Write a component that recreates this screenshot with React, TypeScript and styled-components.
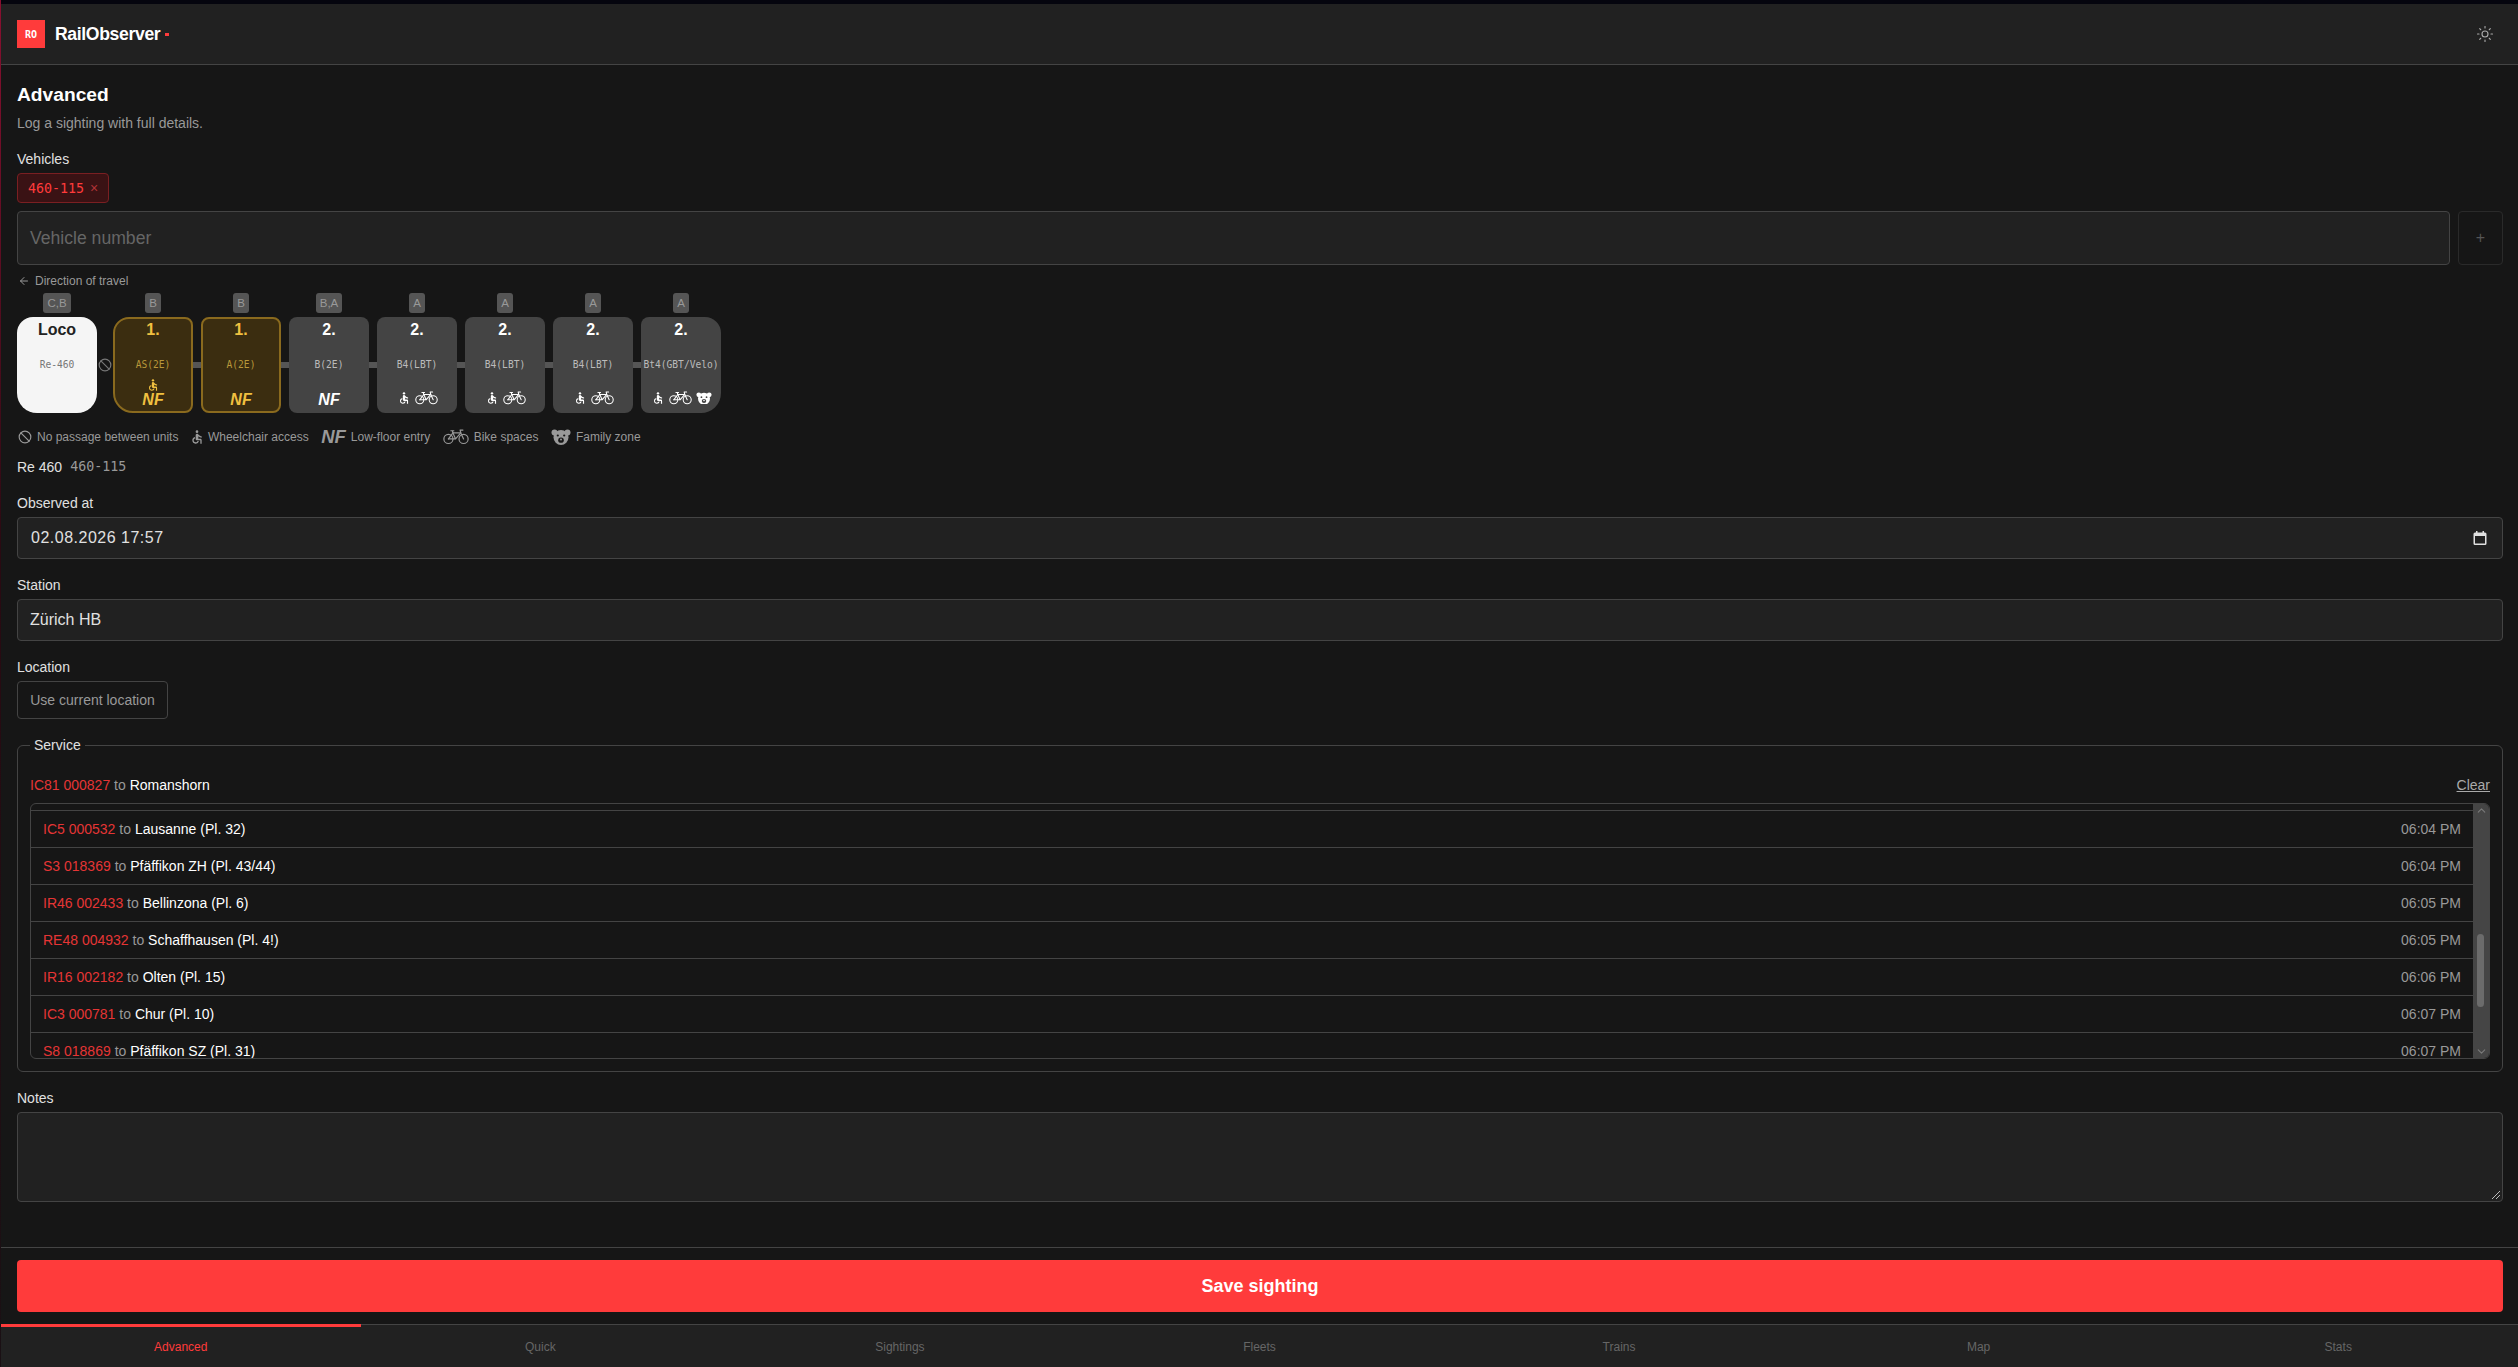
import { Fragment } from "react";
import styled, { createGlobalStyle } from "styled-components";
import { Sun, Ban, ArrowLeft, ChevronUp, ChevronDown } from "lucide-react";
import { MdAccessible } from "react-icons/md";

const GlobalStyle = createGlobalStyle`
  html, body {
    margin: 0;
    padding: 0;
    height: 100%;
    overflow: hidden;
    background: #161616;
    font-family: "Liberation Sans", Arial, sans-serif;
    color: #e0e0e0;
  }
  * { box-sizing: border-box; }
`;

const Shell = styled.div`
  display: flex;
  flex-direction: column;
  height: 1367px;
  overflow: hidden;
  border-left: 1px solid;
  border-image: linear-gradient(#8a1030, #2a0a12 40%, #1a1014) 1;
  background: #161616;
`;

const TopStrip = styled.div`
  height: 4px;
  flex: none;
  background: #05050e;
`;

const Header = styled.header`
  display: flex;
  align-items: center;
  justify-content: space-between;
  height: 61px;
  flex: none;
  padding: 0 16px;
  background: #212121;
  border-bottom: 1px solid #444;
`;

const Brand = styled.div`
  display: flex;
  align-items: center;
  gap: 10px;
`;

const Logo = styled.div`
  width: 28px;
  height: 28px;
  display: flex;
  align-items: center;
  justify-content: center;
  background: #ff3b3b;
  color: #fff;
  font-family: "DejaVu Sans Mono", monospace;
  font-size: 10px;
  font-weight: 700;
`;

const Title = styled.span`
  font-size: 17.6px;
  font-weight: 700;
  color: #fff;
  letter-spacing: -0.35px;
`;

const Dot = styled.span`
  display: inline-block;
  width: 4px;
  height: 3px;
  margin-left: 5px;
  vertical-align: middle;
  background: #ff3b3b;
`;

const ThemeButton = styled.div`
  display: flex;
  color: #aaa;
  margin-right: 8px;
`;

const Main = styled.main`
  flex: 1;
  padding: 19px 15px 0 16px;
  min-height: 0;
`;

const PageTitle = styled.h1`
  margin: 0;
  font-size: 19.2px;
  line-height: 22px;
  font-weight: 700;
  color: #fff;
`;

const Subtitle = styled.p`
  margin: 9px 0 0;
  font-size: 14px;
  line-height: 16px;
  color: #999;
`;

const Label = styled.div<{ $top: number }>`
  margin-top: ${(p) => p.$top}px;
  font-size: 14px;
  line-height: 16px;
  color: #e0e0e0;
`;

const Chip = styled.div`
  display: flex;
  width: fit-content;
  align-items: center;
  gap: 6px;
  height: 30px;
  margin-top: 6px;
  padding: 0 10px;
  border: 1px solid #7a1f22;
  border-radius: 4px;
  background: #3a1214;
  color: #ff3b3b;
  font-family: "DejaVu Sans Mono", monospace;
  font-size: 13.3px;
`;

const ChipClose = styled.span`
  color: #b03236;
  font-family: "Liberation Sans", sans-serif;
  font-size: 14px;
`;

const VehicleRow = styled.div`
  display: flex;
  gap: 8px;
  margin-top: 2px;
`;

const Field = styled.div<{ $h: number }>`
  flex: 1;
  height: ${(p) => p.$h}px;
  display: flex;
  align-items: center;
  justify-content: space-between;
  margin-top: 6px;
  padding: 0 12px;
  background: #212121;
  border: 1px solid #444;
  border-radius: 4px;
  font-size: 16px;
  color: #e0e0e0;
`;

const Placeholder = styled.span`
  color: #666;
  font-size: 17.6px;
`;

const DateText = styled.span`
  margin-left: 1px;
  letter-spacing: 0.5px;
`;

const CalendarGlyph = styled.svg`
  margin-right: 3px;
  color: #e0e0e0;
`;

const AddButton = styled.div`
  width: 45px;
  height: 54px;
  margin-top: 6px;
  display: flex;
  align-items: center;
  justify-content: center;
  border: 1px solid #2a2a2a;
  border-radius: 4px;
  color: #555;
  font-size: 16px;
`;

const Direction = styled.div`
  display: flex;
  align-items: center;
  gap: 5px;
  margin-top: 9px;
  padding-left: 1px;
  height: 14px;
  font-size: 12px;
  color: #999;
`;

const Train = styled.div`
  display: flex;
  align-items: flex-end;
  margin-top: 5px;
`;

const CarColumn = styled.div`
  width: 80px;
  display: flex;
  flex-direction: column;
  align-items: center;
  gap: 4px;
`;

const Sector = styled.span`
  height: 20px;
  min-width: 16px;
  padding: 0 4px;
  display: flex;
  align-items: center;
  justify-content: center;
  border-radius: 3px;
  background: #555;
  color: #999;
  font-size: 11.5px;
`;

const carSkins = {
  loco: "background:#f5f5f5;color:#222;border:none;",
  first: "background:#3b2d10;color:#f0c040;border:2px solid #8a6a1e;",
  second: "background:#444;color:#fff;border:none;",
};

const Car = styled.div<{ $skin: keyof typeof carSkins; $radius: string }>`
  position: relative;
  width: 80px;
  height: 96px;
  display: flex;
  flex-direction: column;
  align-items: center;
  ${(p) => carSkins[p.$skin]}
  border-radius: ${(p) => p.$radius};
  overflow: hidden;
`;

const ClassMark = styled.div<{ $border: boolean }>`
  margin-top: ${(p) => (p.$border ? 2 : 4)}px;
  font-size: 16px;
  line-height: 18px;
  font-weight: 700;
`;

const CarType = styled.div<{ $dim: string; $border: boolean }>`
  position: absolute;
  top: ${(p) => (p.$border ? 40 : 42)}px;
  left: 0;
  right: 0;
  text-align: center;
  font-family: "DejaVu Sans Mono", monospace;
  font-size: 9.6px;
  line-height: 12px;
  white-space: nowrap;
  color: ${(p) => p.$dim};
`;

const CarIcons = styled.div<{ $border: boolean }>`
  position: absolute;
  bottom: ${(p) => (p.$border ? 3 : 5)}px;
  left: 0;
  right: 0;
  display: flex;
  flex-direction: column;
  align-items: center;
`;

const IconRow = styled.div<{ $solo: boolean }>`
  display: flex;
  align-items: center;
  justify-content: center;
  gap: 4px;
  height: 14px;
  margin-bottom: ${(p) => (p.$solo ? 3 : 0)}px;
`;

const NF = styled.span<{ $size: number }>`
  font-size: ${(p) => p.$size}px;
  line-height: 16px;
  font-style: italic;
  font-weight: 700;
`;

const Link = styled.div<{ $w: number }>`
  width: ${(p) => p.$w}px;
  height: 96px;
  flex: none;
  display: flex;
  align-items: center;
  justify-content: center;
  color: #777;

  &::before {
    content: ${(p) => (p.$w === 8 ? '""' : "none")};
    width: 8px;
    height: 6px;
    background: #555;
  }
`;

const Legend = styled.div`
  display: flex;
  align-items: center;
  gap: 12.5px;
  height: 20px;
  margin-top: 14px;
  padding-left: 1px;
  font-size: 12px;
  color: #999;
`;

const LegendItem = styled.span`
  display: flex;
  align-items: center;
  gap: 5px;
`;

const LegendWheel = styled(MdAccessible)`
  margin: 0 -2px;
`;

const Formation = styled.div`
  display: flex;
  gap: 8px;
  align-items: center;
  height: 16px;
  margin-top: 12px;
  font-size: 14px;
  line-height: 16px;
  color: #e0e0e0;
`;

const Mono = styled.span`
  font-family: "DejaVu Sans Mono", monospace;
  font-size: 13.3px;
  color: #999;
`;

const GhostButton = styled.div`
  width: 151px;
  height: 38px;
  margin-top: 6px;
  display: flex;
  align-items: center;
  justify-content: center;
  border: 1px solid #444;
  border-radius: 4px;
  font-size: 14px;
  color: #999;
`;

const Fieldset = styled.fieldset`
  height: 334px;
  margin: 19px 0 0;
  padding: 0 12px;
  border: 1px solid #444;
  border-radius: 6px;
  min-width: 0;
`;

const LegendText = styled.legend`
  margin: 0;
  padding: 0 4px;
  font-size: 14px;
  line-height: 15px;
  color: #e0e0e0;
`;

const SelectedRow = styled.div`
  display: flex;
  justify-content: space-between;
  align-items: center;
  height: 20px;
  margin-top: 22px;
`;

const ServiceText = styled.span`
  font-size: 14px;
  color: #fff;
`;

const Line = styled.span`
  color: #e53535;
`;

const To = styled.span`
  color: #999;
`;

const ClearLink = styled.span`
  font-size: 14px;
  color: #aaa;
  text-decoration: underline;
`;

const ListBox = styled.div`
  display: flex;
  height: 256px;
  margin-top: 8px;
  border: 1px solid #444;
  border-radius: 6px;
  overflow: hidden;
`;

const Rows = styled.div`
  flex: 1;
  min-width: 0;
  padding-top: 6px;
  overflow: hidden;
`;

const Row = styled.div`
  display: flex;
  align-items: center;
  justify-content: space-between;
  height: 37px;
  flex: none;
  padding: 0 12px;
  border-top: 1px solid #444;
`;

const Time = styled.span`
  font-size: 14px;
  color: #999;
`;

const Scrollbar = styled.div`
  position: relative;
  width: 16px;
  flex: none;
  background: #454545;
  color: #7a7a7a;
  display: flex;
  flex-direction: column;
  align-items: center;
  justify-content: space-between;
`;

const Thumb = styled.div`
  position: absolute;
  left: 4px;
  top: 130px;
  width: 7px;
  height: 73px;
  border-radius: 4px;
  background: #6b6b6b;
`;

const NotesBox = styled.div`
  position: relative;
  height: 90px;
  margin-top: 6px;
  background: #212121;
  border: 1px solid #444;
  border-radius: 4px;
`;

const Grip = styled.svg`
  position: absolute;
  right: 1px;
  bottom: 1px;
`;

const Footer = styled.div`
  flex: none;
  height: 77px;
  padding: 12px 15px 0 16px;
  border-top: 1px solid #444;
`;

const SaveButton = styled.div`
  height: 52px;
  display: flex;
  align-items: center;
  justify-content: center;
  border-radius: 4px;
  background: #ff3b3b;
  color: #fff;
  font-size: 18px;
  font-weight: 700;
`;

const Nav = styled.nav`
  flex: none;
  height: 43px;
  display: grid;
  grid-template-columns: repeat(7, 1fr);
  background: #212121;
  border-top: 1px solid #444;
`;

const Tab = styled.div<{ $active?: boolean }>`
  display: flex;
  align-items: center;
  justify-content: center;
  margin-top: -1px;
  padding-bottom: 1px;
  font-size: 12px;
  color: ${(p) => (p.$active ? "#ff3b3b" : "#666")};
  border-top: 3px solid ${(p) => (p.$active ? "#ff3b3b" : "transparent")};
`;

function Bike({ width }: { width: number }) {
  return (
    <svg width={width} height={(width * 14) / 24} viewBox="0 0 24 14" fill="none" stroke="currentColor" strokeWidth="1.1" strokeLinejoin="round" strokeLinecap="round">
      <circle cx="5" cy="9.2" r="4.2" />
      <circle cx="19" cy="9.2" r="4.2" />
      <path d="M5 9.2 9.2 3.6H16.4L19 9.2" />
      <path d="M9.2 3.6 11.6 9.2 16.4 3.6M5 9.2H11.6" />
      <path d="M16.4 3.6 15.8 1H18.4" />
      <path d="M9.2 3.6 8.6 1.6M7.2 1.6H10" />
    </svg>
  );
}

function Bear({ size, face }: { size: number; face: string }) {
  return (
    <svg width={size} height={size * 0.8} viewBox="0 0 20 16" fill="currentColor">
      <circle cx="3.5" cy="3.5" r="3" />
      <circle cx="16.5" cy="3.5" r="3" />
      <ellipse cx="10" cy="8.5" rx="7.5" ry="7.5" />
      <circle cx="6.8" cy="6.5" r="1.1" fill={face} />
      <circle cx="13.2" cy="6.5" r="1.1" fill={face} />
      <ellipse cx="10" cy="11.2" rx="2.8" ry="2.6" fill={face} />
      <circle cx="10" cy="10.6" r="1" fill="currentColor" />
    </svg>
  );
}

type CarData = {
  sector: string;
  cls: string;
  type: string;
  skin: keyof typeof carSkins;
  radius: string;
  nf?: boolean;
  wheel?: boolean;
  bike?: boolean;
  bear?: boolean;
};

const cars: CarData[] = [
  { sector: "B", cls: "1.", type: "AS(2E)", skin: "first", radius: "16px 8px 8px 20px", nf: true, wheel: true },
  { sector: "B", cls: "1.", type: "A(2E)", skin: "first", radius: "8px", nf: true },
  { sector: "B,A", cls: "2.", type: "B(2E)", skin: "second", radius: "8px", nf: true },
  { sector: "A", cls: "2.", type: "B4(LBT)", skin: "second", radius: "8px", wheel: true, bike: true },
  { sector: "A", cls: "2.", type: "B4(LBT)", skin: "second", radius: "8px", wheel: true, bike: true },
  { sector: "A", cls: "2.", type: "B4(LBT)", skin: "second", radius: "8px", wheel: true, bike: true },
  { sector: "A", cls: "2.", type: "Bt4(GBT/Velo)", skin: "second", radius: "8px 16px 20px 8px", wheel: true, bike: true, bear: true },
];

const services = [
  ["IC5 000532", "Lausanne (Pl. 32)", "06:04 PM"],
  ["S3 018369", "Pfäffikon ZH (Pl. 43/44)", "06:04 PM"],
  ["IR46 002433", "Bellinzona (Pl. 6)", "06:05 PM"],
  ["RE48 004932", "Schaffhausen (Pl. 4!)", "06:05 PM"],
  ["IR16 002182", "Olten (Pl. 15)", "06:06 PM"],
  ["IC3 000781", "Chur (Pl. 10)", "06:07 PM"],
  ["S8 018869", "Pfäffikon SZ (Pl. 31)", "06:07 PM"],
];

const tabs = ["Advanced", "Quick", "Sightings", "Fleets", "Trains", "Map", "Stats"];

export default function App() {
  return (
    <Shell>
      <GlobalStyle />
      <TopStrip />
      <Header>
        <Brand>
          <Logo>RO</Logo>
          <Title>
            RailObserver
            <Dot />
          </Title>
        </Brand>
        <ThemeButton>
          <Sun size={18} strokeWidth={1.5} />
        </ThemeButton>
      </Header>

      <Main>
        <PageTitle>Advanced</PageTitle>
        <Subtitle>Log a sighting with full details.</Subtitle>

        <Label $top={20}>Vehicles</Label>
        <Chip>
          460-115 <ChipClose>×</ChipClose>
        </Chip>
        <VehicleRow>
          <Field $h={54}>
            <Placeholder>Vehicle number</Placeholder>
          </Field>
          <AddButton>+</AddButton>
        </VehicleRow>

        <Direction>
          <ArrowLeft size={12} />
          Direction of travel
        </Direction>

        <Train>
          <CarColumn>
            <Sector>C,B</Sector>
            <Car $skin="loco" $radius="16px 16px 20px 20px">
              <ClassMark $border={false}>Loco</ClassMark>
              <CarType $dim="#777" $border={false}>Re-460</CarType>
            </Car>
          </CarColumn>
          <Link $w={16}>
            <Ban size={14} />
          </Link>
          {cars.map((car, i) => {
            const bordered = car.skin === "first";
            return (
              <Fragment key={i}>
                {i > 0 && <Link $w={8} />}
                <CarColumn>
                  <Sector>{car.sector}</Sector>
                  <Car $skin={car.skin} $radius={car.radius}>
                    <ClassMark $border={bordered}>{car.cls}</ClassMark>
                    <CarType $dim={bordered ? "#b8973a" : "#bbb"} $border={bordered}>
                      {car.type}
                    </CarType>
                    <CarIcons $border={bordered}>
                      <IconRow $solo={!car.nf}>
                        {car.wheel && <MdAccessible size={14} />}
                        {car.bike && <Bike width={23} />}
                        {car.bear && <Bear size={16} face="#444" />}
                      </IconRow>
                      {car.nf && <NF $size={16}>NF</NF>}
                    </CarIcons>
                  </Car>
                </CarColumn>
              </Fragment>
            );
          })}
        </Train>

        <Legend>
          <LegendItem>
            <Ban size={14} /> No passage between units
          </LegendItem>
          <LegendItem>
            <LegendWheel size={16} /> Wheelchair access
          </LegendItem>
          <LegendItem>
            <NF $size={18.5}>NF</NF> Low-floor entry
          </LegendItem>
          <LegendItem>
            <Bike width={26} /> Bike spaces
          </LegendItem>
          <LegendItem>
            <Bear size={20} face="#161616" /> Family zone
          </LegendItem>
        </Legend>

        <Formation>
          Re 460 <Mono>460-115</Mono>
        </Formation>

        <Label $top={20}>Observed at</Label>
        <Field $h={42}>
          <DateText>02.08.2026 17:57</DateText>
          <CalendarGlyph width="14" height="14" viewBox="0 0 14 14" fill="currentColor">
            <path d="M3 0h1.5v1.5h5V0H11v1.5h1A1.5 1.5 0 0 1 13.5 3v9.5A1.5 1.5 0 0 1 12 14H2a1.5 1.5 0 0 1-1.5-1.5V3A1.5 1.5 0 0 1 2 1.5h1V0Zm-1 5v7.5h10V5H2Z" />
          </CalendarGlyph>
        </Field>

        <Label $top={18}>Station</Label>
        <Field $h={42}>Zürich HB</Field>

        <Label $top={18}>Location</Label>
        <GhostButton>Use current location</GhostButton>

        <Fieldset>
          <LegendText>Service</LegendText>
          <SelectedRow>
            <ServiceText>
              <Line>IC81 000827</Line> <To>to</To> Romanshorn
            </ServiceText>
            <ClearLink>Clear</ClearLink>
          </SelectedRow>
          <ListBox>
            <Rows>
              {services.map(([line, dest, time]) => (
                <Row key={line}>
                  <ServiceText>
                    <Line>{line}</Line> <To>to</To> {dest}
                  </ServiceText>
                  <Time>{time}</Time>
                </Row>
              ))}
            </Rows>
            <Scrollbar>
              <ChevronUp size={13} />
              <Thumb />
              <ChevronDown size={13} />
            </Scrollbar>
          </ListBox>
        </Fieldset>

        <Label $top={18}>Notes</Label>
        <NotesBox>
          <Grip width="10" height="10" viewBox="0 0 10 10" stroke="#bbb" strokeWidth="1">
            <path d="M1 9 9 1M5 9l4-4" />
          </Grip>
        </NotesBox>
      </Main>

      <Footer>
        <SaveButton>Save sighting</SaveButton>
      </Footer>

      <Nav>
        {tabs.map((t, i) => (
          <Tab key={t} $active={i === 0}>
            {t}
          </Tab>
        ))}
      </Nav>
    </Shell>
  );
}
